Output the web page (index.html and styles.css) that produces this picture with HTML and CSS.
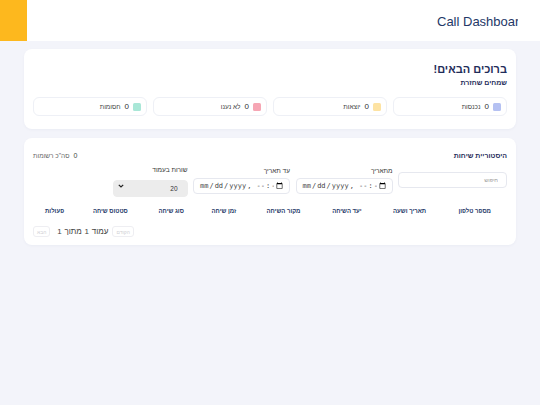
FILE: index.html
```html
<!DOCTYPE html>
<html lang="he" dir="rtl">
<head>
<meta charset="utf-8">
<title>Call Dashboard</title>
<link rel="stylesheet" href="styles.css">
</head>
<body>
<header class="topbar">
  <div class="brand"><span class="brand-title">Call Dashboard</span></div>
  <div class="accent"></div>
</header>
<main class="main">
  <section class="card welcome">
    <h1 class="welcome-title">ברוכים הבאים!</h1>
    <p class="welcome-sub">שמחים שחזרת</p>
    <div class="stats">
      <div class="stat"><span class="dot dot-blue"></span><span class="num">0</span><span class="label">נכנסות</span></div>
      <div class="stat"><span class="dot dot-yellow"></span><span class="num">0</span><span class="label">יוצאות</span></div>
      <div class="stat"><span class="dot dot-pink"></span><span class="num">0</span><span class="label">לא נענו</span></div>
      <div class="stat"><span class="dot dot-teal"></span><span class="num">0</span><span class="label">חסומות</span></div>
    </div>
  </section>
  <section class="card history">
    <div class="history-head">
      <h2 class="history-title">היסטוריית שיחות</h2>
      <div class="total"><span class="total-num">0</span><span class="total-label">סה"כ רשומות</span></div>
    </div>
    <div class="filters">
      <input class="search" type="text" placeholder="חיפוש">
      <label class="field"><span class="field-label">מתאריך</span><input class="date" type="datetime-local"></label>
      <label class="field"><span class="field-label">עד תאריך</span><input class="date" type="datetime-local"></label>
      <label class="field"><span class="field-label">שורות בעמוד</span>
        <span class="select-wrap">
          <select class="select"><option>20</option></select>
          <svg class="chev" width="6" height="4" viewBox="0 0 6 4" aria-hidden="true"><path d="M0.8 0.8 L3 3 L5.2 0.8" fill="none" stroke="#222" stroke-width="1.2"/></svg>
        </span>
      </label>
    </div>
    <table class="calls">
      <thead>
        <tr>
          <th>מספר טלפון</th>
          <th>תאריך ושעה</th>
          <th>יעד השיחה</th>
          <th>מקור השיחה</th>
          <th>זמן שיחה</th>
          <th>סוג שיחה</th>
          <th>סטטוס שיחה</th>
          <th>פעולות</th>
        </tr>
      </thead>
      <tbody></tbody>
    </table>
    <div class="pager">
      <button class="pg-btn" disabled>הקודם</button>
      <span class="pg-info">עמוד 1 מתוך 1</span>
      <button class="pg-btn" disabled>הבא</button>
    </div>
  </section>
</main>
</body>
</html>
```

FILE: styles.css
```css
* { box-sizing: border-box; }
html, body { margin: 0; padding: 0; }
body {
  background: #f3f4fa;
  font-family: "Liberation Sans", Arial, "DejaVu Sans", sans-serif;
  color: #1f2d5a;
}
.topbar {
  height: 41px;
  background: #ffffff;
  display: flex;
  align-items: stretch;
  justify-content: space-between;
}
.brand {
  width: 81px;
  margin-right: 22px;
  overflow: hidden;
  white-space: nowrap;
  display: flex;
  align-items: center;
  direction: ltr;
}
.brand-title {
  font-size: 13px;
  color: #243867;
  padding-top: 1px;
}
.accent {
  width: 27px;
  background: #fdb81e;
}
.main {
  padding: 8px 24px;
  display: flex;
  flex-direction: column;
  gap: 9px;
}
.card {
  background: #ffffff;
  border-radius: 8px;
  padding: 10px 9px;
  box-shadow: 0 1px 3px rgba(30, 40, 90, 0.04);
}
.welcome { height: 80px; padding-top: 13px; }
.welcome-title {
  margin: 0;
  font-size: 11px;
  line-height: 14px;
  font-weight: 700;
  color: #1f2d5a;
}
.welcome-sub {
  margin: 2px 0 0;
  font-size: 7px;
  line-height: 10px;
  font-weight: 700;
  color: #1f2d5a;
}
.stats {
  margin-top: 9px;
  display: grid;
  grid-template-columns: repeat(4, 1fr);
  gap: 6px;
}
.stat {
  height: 19px;
  border: 1px solid #eef0f6;
  border-radius: 6px;
  display: flex;
  align-items: center;
  gap: 4px;
  padding: 0 5px;
  font-size: 6.5px;
  color: #333;
}
.dot {
  width: 8px;
  height: 8px;
  border-radius: 1.5px;
  display: inline-block;
}
.dot-blue { background: #b5c1f2; }
.dot-yellow { background: #fde3a3; }
.dot-pink { background: #f6a6b4; }
.dot-teal { background: #a9e7d7; }
.num { font-size: 8px; color: #333; }
.label { color: #444; }
.history { height: 107px; padding-top: 12px; }
.history-head {
  display: flex;
  justify-content: space-between;
  align-items: center;
  height: 10px;
}
.history-title {
  margin: 0;
  font-size: 7px;
  font-weight: 700;
  color: #1f2d5a;
}
.total {
  display: flex;
  gap: 4px;
  font-size: 6.5px;
  color: #666;
  align-items: center;
}
.total-num { font-size: 7px; color: #444; }
.filters {
  margin-top: 5px;
  display: flex;
  align-items: center;
  gap: 5.5px;
}
.search {
  width: 109px;
  height: 16px;
  border: 1px solid #e6e8ef;
  border-radius: 4px;
  font-family: inherit;
  font-size: 5.5px;
  padding: 0 8px;
  color: #333;
  background: #fff;
}
.search::placeholder { color: #999; }
.field {
  display: flex;
  flex-direction: column;
  gap: 2px;
}
.field-label {
  font-size: 6.5px;
  line-height: 10px;
  color: #333;
}
.date {
  width: 97px;
  height: 16px;
  border: 1px solid #e6e8ef;
  border-radius: 4px;
  font-size: 7px;
  direction: ltr;
  padding: 0 4px 0 5px;
  color: #444;
  background: #fff;
}
.select-wrap {
  position: relative;
  display: block;
  width: 75px;
  height: 17px;
}
.select {
  -webkit-appearance: none;
  appearance: none;
  width: 75px;
  height: 17px;
  border: 1px solid #ececec;
  border-radius: 4px;
  background: #ececec;
  font-family: inherit;
  font-size: 6.5px;
  color: #333;
  padding: 0 9px;
}
.chev {
  position: absolute;
  left: 5px;
  top: 7px;
}
.calls {
  width: 100%;
  margin-top: 7px;
  border-collapse: collapse;
}
.calls th {
  font-size: 6px;
  font-weight: 700;
  color: #243867;
  padding: 6px 4px;
  text-align: center;
  line-height: 8px;
}
.pager {
  margin-top: 5px;
  display: flex;
  justify-content: flex-end;
  align-items: center;
  gap: 4px;
}
.pg-btn {
  font-family: inherit;
  font-size: 5px;
  color: #cfcfd4;
  background: #fff;
  border: 1px solid #eeeef2;
  border-radius: 3px;
  padding: 2px 3px;
  height: 11px;
  margin: 0;
}
.pg-info {
  font-size: 8px;
  color: #444;
  word-spacing: 0.5px;
  padding-left: 3px;
}
```
